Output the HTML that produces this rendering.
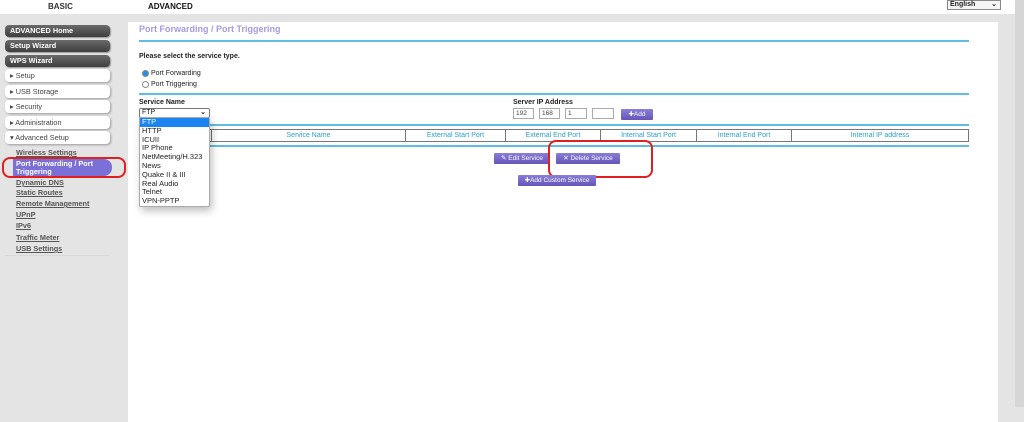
<!DOCTYPE html>
<html><head><meta charset="utf-8"><style>
*{margin:0;padding:0;box-sizing:border-box}
body{width:1024px;height:407px;position:relative;overflow:hidden;background:#e4e4e4;font-family:"Liberation Sans",Arial,sans-serif;font-size:7px;color:#222}
.a{position:absolute}
.top{left:0;top:0;width:1024px;height:14px;background:#fff}
.main{left:128px;top:22px;width:870px;height:400px;background:#fff}
.sb{left:1015px;top:0;width:9px;height:407px;background:#d6d6d6}
.bl{position:absolute;left:139px;width:830px;height:2px;background:#5fbde0}
.db{position:absolute;left:5px;width:105px;height:12px;border-radius:4px;background:linear-gradient(#6a6a6a,#3e3e3e);color:#fff;font-weight:bold;font-size:7.3px;line-height:12px;padding-left:5px;box-shadow:1px 1px 1px #999}
.wb{position:absolute;left:5px;width:105px;height:13px;border-radius:4px;background:#fff;color:#444;font-size:7.3px;line-height:13px;padding-left:5px;box-shadow:1px 1px 2px #999}
.lk{position:absolute;left:16px;font-size:7.3px;font-weight:bold;color:#555;text-decoration:underline}
.hr{position:absolute;left:5px;width:105px;height:1px;background:#d8d8d8}
.btn{position:absolute;height:11px;background:linear-gradient(#8a7ed8,#6455b8);color:#fff;font-size:6.5px;line-height:11px;text-align:center;border-radius:1px}
.in{position:absolute;top:108px;height:11px;border:1px solid #aaa;font-size:6.5px;line-height:9px;padding-left:2px;color:#444}
td{border:1px solid #777;color:#2a9fd0;font-size:7px;text-align:center;height:12px}
</style></head><body>
<div class="a top"></div>
<div class="a" style="left:48px;top:2px;font-size:8px;font-weight:bold;color:#333">BASIC</div>
<div class="a" style="left:148px;top:2px;font-size:8px;font-weight:bold;color:#111">ADVANCED</div>
<div class="a" style="left:947px;top:0;width:54px;height:10px;border:1px solid #888;background:#f4f4f4;font-size:7px;font-weight:bold;padding-left:2px;line-height:8px">English<span style="position:absolute;right:3px">⌄</span></div>
<div class="a main"></div>
<div class="a sb"></div>

<div class="db" style="top:25px">ADVANCED Home</div>
<div class="db" style="top:40px">Setup Wizard</div>
<div class="db" style="top:55px">WPS Wizard</div>
<div class="wb" style="top:69px">▸ Setup</div>
<div class="wb" style="top:85px">▸ USB Storage</div>
<div class="wb" style="top:100px">▸ Security</div>
<div class="wb" style="top:116px">▸ Administration</div>
<div class="wb" style="top:131px">▾ Advanced Setup</div>
<div class="lk" style="top:148px">Wireless Settings</div>
<div class="a" style="left:13px;top:159px;width:99px;height:17px;background:#7b70d8;border-radius:0 8px 8px 0;color:#fff;font-size:7.3px;font-weight:bold;line-height:8px;padding:1px 3px">Port Forwarding / Port<br>Triggering</div>
<div class="a" style="left:2px;top:157px;width:124px;height:21px;border:2px solid #e02020;border-radius:8px"></div>
<div class="lk" style="top:178px">Dynamic DNS</div>
<div class="lk" style="top:188px">Static Routes</div>
<div class="lk" style="top:199px">Remote Management</div>
<div class="lk" style="top:210px">UPnP</div>
<div class="lk" style="top:221px">IPv6</div>
<div class="lk" style="top:233px">Traffic Meter</div>
<div class="lk" style="top:244px">USB Settings</div>
<div class="hr" style="top:255px"></div>

<div class="a" style="left:139px;top:24px;font-size:9px;font-weight:bold;color:#a59be0">Port Forwarding / Port Triggering</div>
<div class="bl" style="top:40px"></div>
<div class="a" style="left:139px;top:53px;font-weight:bold">Please select the service type.</div>
<div class="a" style="left:142px;top:70px;width:7px;height:7px;border-radius:50%;background:#2b8de0;border:1px solid #888"></div>
<div class="a" style="left:151px;top:70px">Port Forwarding</div>
<div class="a" style="left:142px;top:81px;width:7px;height:7px;border-radius:50%;background:#fff;border:1px solid #888"></div>
<div class="a" style="left:151px;top:81px">Port Triggering</div>
<div class="bl" style="top:93px"></div>
<div class="a" style="left:139px;top:99px;font-weight:bold">Service Name</div>
<div class="a" style="left:139px;top:108px;width:71px;height:10px;border:1px solid #777;border-radius:2px;font-size:7px;line-height:8px;padding-left:2px">FTP<span style="position:absolute;right:3px;font-weight:bold">⌄</span></div>
<div class="a" style="left:513px;top:99px;font-weight:bold">Server IP Address</div>
<div class="in" style="left:513px;width:21px">192</div>
<div class="in" style="left:539px;width:21px">168</div>
<div class="in" style="left:565px;width:22px">1</div>
<div class="in" style="left:592px;width:22px"></div>
<div class="btn" style="left:621px;top:109px;width:32px">✚Add</div>
<div class="bl" style="top:124px"></div>
<table class="a" style="left:139px;top:129px;width:830px;border-collapse:collapse"><tr>
<td style="width:72px"></td><td style="width:194px">Service Name</td><td style="width:100px">External Start Port</td><td style="width:95px">External End Port</td><td style="width:96px">Internal Start Port</td><td style="width:95px">Internal End Port</td><td>Internal IP address</td></tr></table>
<div class="bl" style="top:145px"></div>
<div class="btn" style="left:494px;top:153px;width:56px">✎ Edit Service</div>
<div class="btn" style="left:556px;top:153px;width:64px">✕ Delete Service</div>
<div class="a" style="left:548px;top:140px;width:105px;height:38px;border:2px solid #e02020;border-radius:8px"></div>
<div class="btn" style="left:518px;top:175px;width:78px">✚Add Custom Service</div>

<div class="a" style="left:139px;top:117px;width:71px;height:90px;background:#fff;border:1px solid #aaa;border-radius:2px;box-shadow:2px 4px 8px rgba(0,0,0,.25);font-size:7.5px;line-height:8.8px;color:#222">
<div style="background:#1a84f0;color:#fff;padding-left:2px">FTP</div>
<div style="padding-left:2px">HTTP<br>ICUII<br>IP Phone<br>NetMeeting/H.323<br>News<br>Quake II &amp; III<br>Real Audio<br>Telnet<br>VPN-PPTP</div></div>
</body></html>
